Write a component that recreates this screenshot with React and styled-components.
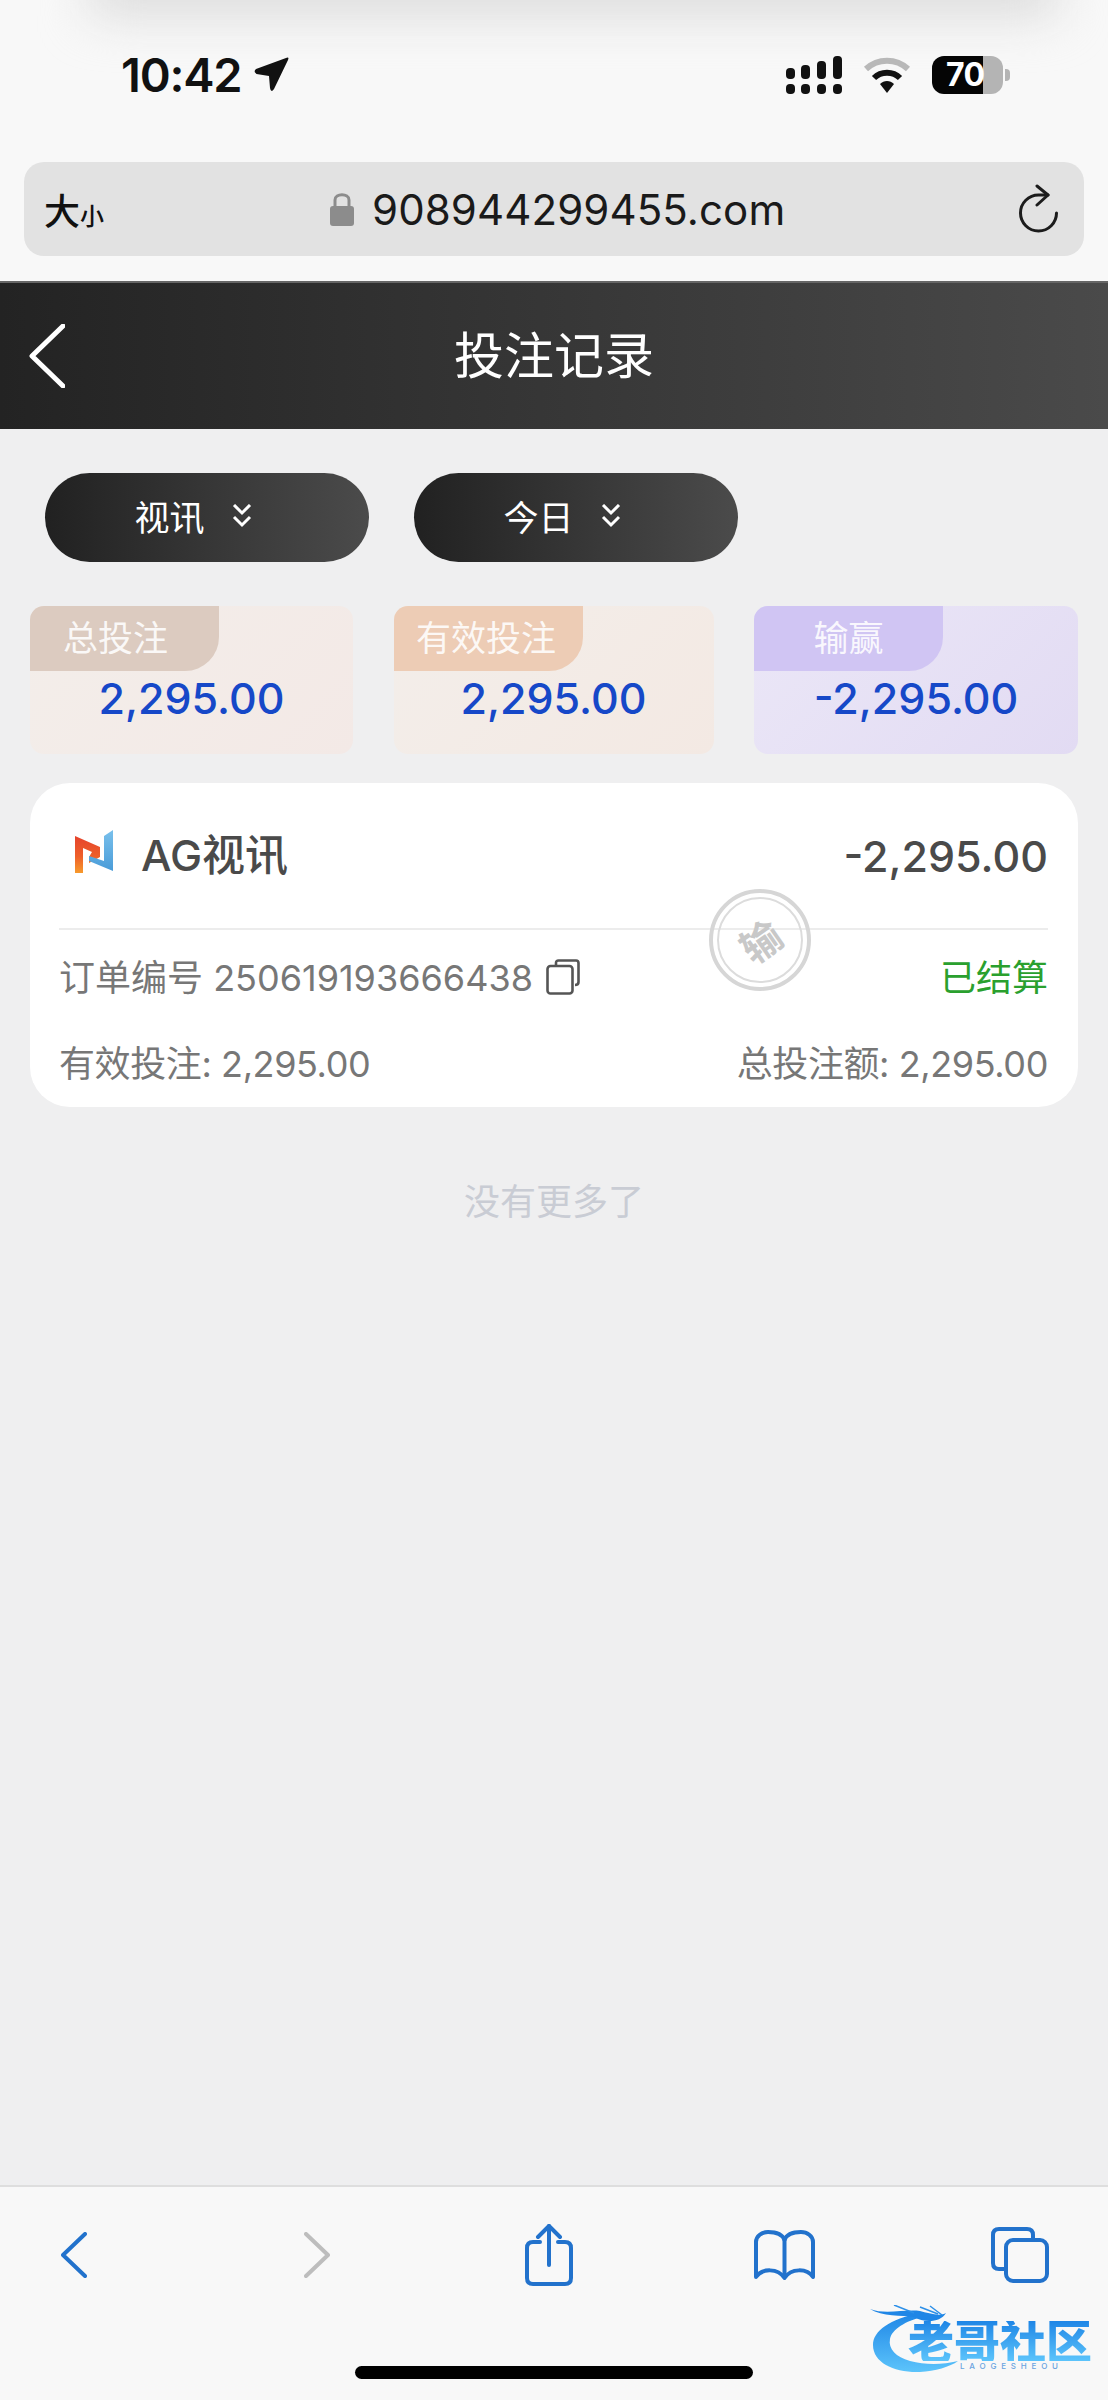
import React from "react";
import styled, { createGlobalStyle } from "styled-components";

const GlobalStyle = createGlobalStyle`
  html, body {
    margin: 0;
    padding: 0;
    background: #efeff0;
  }
  * {
    box-sizing: border-box;
  }
`;

const Page = styled.div`
  width: 1108px;
  height: 2400px;
  display: flex;
  flex-direction: column;
  position: relative;
  overflow: hidden;
  background: #efeff0;
  font-family: Inter, "Noto Sans CJK SC", sans-serif;
`;

// Safari chrome
const Chrome = styled.div`
  height: 281px;
  padding-top: 55px;
  position: relative;
  overflow: hidden;
  background: #f8f8f8;
  flex-shrink: 0;

  &::before {
    content: "";
    position: absolute;
    top: -44px;
    left: 90px;
    right: 50px;
    height: 60px;
    background: #dcdcdc;
    filter: blur(24px);
  }
`;

const StatusBar = styled.div`
  height: 40px;
  padding: 0 105px 0 121px;
  display: flex;
  justify-content: space-between;
  align-items: center;
  position: relative;
`;

const StatusLeft = styled.div`
  display: flex;
  align-items: center;
  gap: 13px;
`;

const Clock = styled.span`
  font-size: 47px;
  font-weight: 600;
  letter-spacing: -1.2px;
  line-height: 40px;
  color: #111;
`;

const StatusRight = styled.div`
  display: flex;
  align-items: center;
  gap: 21px;
`;

const Battery = styled.div`
  width: 71px;
  height: 38px;
  border-radius: 12px;
  background: linear-gradient(90deg, #050505 0, #050505 72%, #b4b4b4 72%, #b4b4b4 100%);
  color: #fff;
  font-size: 32px;
  font-weight: 700;
  line-height: 38px;
  padding-left: 14px;
  letter-spacing: -0.5px;
  position: relative;

  &::after {
    content: "";
    position: absolute;
    right: -7px;
    top: 13px;
    width: 5px;
    height: 12px;
    border-radius: 0 4px 4px 0;
    background: #b4b4b4;
  }
`;

const UrlBar = styled.div`
  height: 94px;
  margin: 67px 24px 0;
  padding: 0 25px 0 20px;
  border-radius: 20px;
  background: #e2e2e2;
  display: flex;
  align-items: center;
  position: relative;
`;

const TextSize = styled.div`
  width: 286px;
  display: flex;
  align-items: baseline;
  color: #111;
  font-size: 36px;
  font-weight: 500;
`;

const SmallChar = styled.span`
  font-size: 24px;
`;

const Domain = styled.div`
  flex: 1;
  display: flex;
  align-items: center;
  gap: 18px;
  color: #1a1a1a;
  font-size: 42px;
  letter-spacing: 0.1px;
`;

// Page header
const Header = styled.header`
  height: 148px;
  flex-shrink: 0;
  padding-left: 29px;
  display: flex;
  align-items: center;
  position: relative;
  background: linear-gradient(90deg, #232323, #4a4a4a);
  border-top: 2px solid #666;
`;

const HeaderTitle = styled.h1`
  position: absolute;
  left: 0;
  right: 0;
  margin: 0;
  padding-bottom: 8px;
  text-align: center;
  color: #fff;
  font-size: 50px;
  font-weight: 400;
`;

const Main = styled.main`
  flex: 1;
  padding: 44px 30px 0;
`;

const Filters = styled.div`
  padding-left: 15px;
  display: flex;
  gap: 45px;
`;

const Pill = styled.div`
  width: 324px;
  height: 89px;
  padding: 0 28px 4px 0;
  border-radius: 45px;
  background: linear-gradient(90deg, #212121, #4b4b4b);
  color: #fff;
  font-size: 35px;
  display: flex;
  align-items: center;
  justify-content: center;
  gap: 27px;
`;

const Summary = styled.div`
  margin-top: 44px;
  display: flex;
  justify-content: space-between;
`;

const SummaryCard = styled.div`
  width: ${({ $w }) => $w}px;
  height: 148px;
  border-radius: 14px;
  background: ${({ $bg }) => $bg};
  overflow: hidden;
`;

const SummaryTag = styled.div`
  width: 189px;
  height: 65px;
  padding-right: ${({ $pad }) => $pad || 0}px;
  border-bottom-right-radius: 34px;
  background: ${({ $bg }) => $bg};
  color: rgba(255, 255, 255, 0.88);
  font-size: 35px;
  line-height: 64px;
  text-align: center;
`;

const SummaryValue = styled.div`
  margin-top: 1px;
  color: #1648c8;
  font-size: 43px;
  font-weight: 500;
  line-height: 52px;
  text-align: center;
`;

const OrderCard = styled.section`
  margin-top: 29px;
  padding: 0 30px 0 29px;
  height: 324px;
  border-radius: 40px;
  background: #fff;
  position: relative;
`;

const OrderHead = styled.div`
  height: 147px;
  display: flex;
  align-items: center;
  justify-content: space-between;
  border-bottom: 2px solid #ececec;
`;

const Game = styled.div`
  display: flex;
  align-items: center;
  gap: 28px;
  padding: 0 0 8px 16px;
  color: #4a4a4a;
  font-size: 43px;
  font-weight: 500;
`;

const Amount = styled.div`
  color: #4a4a4a;
  font-size: 43px;
  font-weight: 500;
`;

const OrderRow = styled.div`
  height: ${({ $h }) => $h}px;
  display: flex;
  align-items: center;
  justify-content: space-between;
  color: #777;
  font-size: 36px;
`;

const OrderNo = styled.div`
  display: flex;
  align-items: center;
  gap: 13px;
`;

const CopyGlyph = styled.svg`
  margin-top: 5px;
`;

const Settled = styled.span`
  color: #2aa02e;
`;

const Stat = styled.span`
  letter-spacing: -0.4px;
`;

const Stamp = styled.div`
  position: absolute;
  left: 679px;
  top: 106px;
  width: 102px;
  height: 102px;
  border-radius: 50%;
  border: 4px solid #d6d6d6;
  display: flex;
  align-items: center;
  justify-content: center;
  color: #c8c8c8;
  font-size: 40px;
  font-weight: 700;

  &::after {
    content: "";
    position: absolute;
    inset: 4px;
    border-radius: 50%;
    border: 2px solid #dcdcdc;
  }
`;

const StampText = styled.span`
  transform: rotate(-35deg);
`;

const NoMore = styled.div`
  margin-top: 70px;
  text-align: center;
  color: #c9ccd4;
  font-size: 36px;
  line-height: 50px;
`;

// Safari bottom toolbar
const Toolbar = styled.footer`
  height: 215px;
  flex-shrink: 0;
  background: #f8f8f8;
  border-top: 2px solid #dedede;
`;

const ToolbarIcons = styled.div`
  height: 136px;
  padding-left: 61px;
  display: grid;
  grid-template-columns: 243px 221px 229px 237px 58px;
  align-items: center;
  justify-items: start;
`;

const HomeIndicator = styled.div`
  width: 398px;
  height: 13px;
  margin: 43px 0 0 355px;
  border-radius: 7px;
  background: #000;
`;

const Watermark = styled.div`
  position: absolute;
  right: 13px;
  bottom: 25px;
  width: 225px;
  height: 70px;
`;

const WatermarkDragon = styled.svg`
  position: absolute;
  left: 0;
  top: 0;
`;

const WatermarkName = styled.div`
  position: absolute;
  left: 38px;
  top: 16px;
  font-size: 46px;
  font-weight: 900;
  line-height: 40px;
  white-space: nowrap;
  background: linear-gradient(180deg, #1f86e6, #5cc4fb);
  -webkit-background-clip: text;
  background-clip: text;
  color: transparent;
`;

const WatermarkSub = styled.div`
  position: absolute;
  left: 90px;
  top: 56px;
  color: #6aa4e0;
  font-size: 8px;
  font-weight: 500;
  line-height: 10px;
  letter-spacing: 4.8px;
  white-space: nowrap;
`;

const BLUE = "#2272cc";

const LocationArrow = () => (
  <svg width="35" height="36" viewBox="0 0 35 36">
    <path d="M32 1 Q35.500 -0.500 34 3 L20 32 Q17 36.500 16 31 L15 19 L2.500 17 Q-1 14.500 2 12 Z" fill="#111" />
  </svg>
);

const Signal = () => (
  <svg width="56" height="38" viewBox="0 0 56 38" fill="#111">
    <rect x="0" y="12" width="9" height="11" rx="4" />
    <rect x="15" y="9" width="9" height="14" rx="4" />
    <rect x="31" y="5" width="9" height="18" rx="4" />
    <rect x="47" y="0" width="9" height="23" rx="4" />
    <rect x="0" y="28" width="9" height="10" rx="4" />
    <rect x="15" y="28" width="9" height="10" rx="4" />
    <rect x="31" y="28" width="9" height="10" rx="4" />
    <rect x="47" y="28" width="9" height="10" rx="4" />
  </svg>
);

const Wifi = () => (
  <svg width="48" height="36" viewBox="0 0 48 36" fill="none">
    <path d="M3 12 C15 1 33 1 45 12" stroke="#b8b8b8" strokeWidth="6" />
    <path d="M11 21 C18 14 30 14 37 21" stroke="#111" strokeWidth="6" />
    <path d="M17 27 L24 36 L31 27 C27 23 21 23 17 27 Z" fill="#111" />
  </svg>
);

const Lock = () => (
  <svg width="24" height="34" viewBox="0 0 24 34">
    <path d="M5 15 V8 C5 1 19 1 19 8 V15" fill="none" stroke="#8c8c8c" strokeWidth="3" />
    <rect x="0" y="14" width="24" height="20" rx="3" fill="#8c8c8c" />
  </svg>
);

const Reload = () => (
  <svg width="40" height="50" viewBox="0 0 40 50" fill="none" stroke="#1c1c1c" strokeWidth="3" strokeLinecap="round" strokeLinejoin="round">
    <path d="M29 11 H19.500 A18 18 0 1 0 37.500 29" />
    <path d="M18 2 L29 11 L18 21" />
  </svg>
);

const BackChevron = () => (
  <svg width="36" height="64" viewBox="0 0 36 64" fill="none" stroke="#fff" strokeWidth="5" strokeLinecap="round" strokeLinejoin="round">
    <path d="M34 2 L3 32 L34 62" />
  </svg>
);

const DoubleChevron = () => (
  <svg width="20" height="24" viewBox="0 0 20 24" fill="none" stroke="#fff" strokeWidth="3">
    <path d="M2 1 L10 9 L18 1" />
    <path d="M2 13 L10 21 L18 13" />
  </svg>
);

const AgLogo = () => (
  <svg width="38" height="44" viewBox="0 0 38 44">
    <defs>
      <linearGradient id="agLeft" x1="0" y1="0" x2="0" y2="1">
        <stop offset="0" stopColor="#e5432c" />
        <stop offset="0.55" stopColor="#ee5f2a" />
        <stop offset="1" stopColor="#f79a2c" />
      </linearGradient>
      <linearGradient id="agRight" x1="0" y1="0" x2="0" y2="1">
        <stop offset="0" stopColor="#79c0ec" />
        <stop offset="1" stopColor="#4a9cd8" />
      </linearGradient>
    </defs>
    <path d="M0 6 L25 17 V27 L14 33 V27 L17 22 L8 18 V43 L0 43 Z" fill="url(#agLeft)" />
    <path d="M38 0 V41 L14 31 V26 L29 31 V6 Z" fill="url(#agRight)" />
  </svg>
);

const CopyIcon = () => (
  <CopyGlyph width="34" height="36" viewBox="0 0 34 36" fill="none" stroke="#555" strokeWidth="2.6">
    <path d="M10 7 V4 Q10 1.500 12.500 1.500 H30 Q32.500 1.500 32.500 4 V23 Q32.500 26 29 26" />
    <rect x="1.500" y="7" width="25" height="27.500" rx="3" />
  </CopyGlyph>
);

const NavBack = ({ color }) => (
  <svg width="26" height="46" viewBox="0 0 26 46" fill="none" stroke={color} strokeWidth="4" strokeLinecap="round" strokeLinejoin="round">
    <path d="M24 2 L2 23 L24 44" />
  </svg>
);

const NavForward = ({ color }) => (
  <svg width="26" height="46" viewBox="0 0 26 46" fill="none" stroke={color} strokeWidth="4" strokeLinecap="round" strokeLinejoin="round">
    <path d="M2 2 L24 23 L2 44" />
  </svg>
);

const ShareIcon = () => (
  <svg width="48" height="62" viewBox="0 0 48 62" fill="none" stroke={BLUE} strokeWidth="4" strokeLinecap="round" strokeLinejoin="round">
    <path d="M15 18 H8 Q2 18 2 24 V54 Q2 60 8 60 H40 Q46 60 46 54 V24 Q46 18 40 18 H33" />
    <path d="M24 41 V2" />
    <path d="M13 13 L24 2 L35 13" />
  </svg>
);

const BookIcon = () => (
  <svg width="61" height="50" viewBox="0 0 61 50" fill="none" stroke={BLUE} strokeWidth="4" strokeLinejoin="round">
    <path d="M30.500 10 C28 3 20 2 14 2 C8 2 2 6 2 12 V47 C8 38 24 38 30.500 48 C37 38 53 38 59 47 V12 C59 6 53 2 47 2 C41 2 33 3 30.500 10 Z" />
    <path d="M30.500 10 V48" />
  </svg>
);

const TabsIcon = () => (
  <svg width="58" height="56" viewBox="0 0 58 56" fill="none" stroke={BLUE} strokeWidth="4">
    <path d="M13 42 H8 Q2 42 2 36 V8 Q2 2 8 2 H36 Q42 2 42 8 V13" />
    <rect x="15" y="13" width="41" height="41" rx="7" />
  </svg>
);

const DragonMark = () => (
  <WatermarkDragon width="225" height="70" viewBox="0 0 225 70">
    <defs>
      <linearGradient id="dragon" x1="0" y1="0" x2="0" y2="1">
        <stop offset="0" stopColor="#1f86e6" />
        <stop offset="1" stopColor="#5cc4fb" />
      </linearGradient>
    </defs>
    <path d="M50 8 C20 14 3 26 3 40 C3 58 25 68 50 67 C65 66 80 62 88 56 C72 60 55 60 40 56 C26 52 18 44 20 34 C22 24 36 16 52 12 Z" fill="url(#dragon)" />
    <path d="M0 4 C15 10 35 4 50 6 C58 8 70 12 76 8 C70 18 54 18 44 12 C32 10 12 12 0 4 Z" fill="#1f86e6" />
    <path d="M24 0 L44 8 M50 2 L68 9 M60 1 L72 10" stroke="#2d90e8" strokeWidth="1.5" fill="none" />
  </WatermarkDragon>
);

const summaries = [
  { label: "总投注", value: "2,295.00", w: 323, bg: "linear-gradient(135deg, #f3eeea, #f3e9e6)", tag: "#dccbc0", pad: 18 },
  { label: "有效投注", value: "2,295.00", w: 320, bg: "linear-gradient(135deg, #f3eeea, #f3e9e3)", tag: "#edccb5", pad: 4 },
  { label: "输赢", value: "-2,295.00", w: 324, bg: "linear-gradient(135deg, #ebe7f7, #e2dbf3)", tag: "#d0c5f3" },
];

const App = () => (
  <Page>
    <GlobalStyle />
    <Chrome>
      <StatusBar>
        <StatusLeft>
          <Clock>10:42</Clock>
          <LocationArrow />
        </StatusLeft>
        <StatusRight>
          <Signal />
          <Wifi />
          <Battery>70</Battery>
        </StatusRight>
      </StatusBar>
      <UrlBar>
        <TextSize>
          大<SmallChar>小</SmallChar>
        </TextSize>
        <Domain>
          <Lock />
          908944299455.com
        </Domain>
        <Reload />
      </UrlBar>
    </Chrome>

    <Header>
      <BackChevron />
      <HeaderTitle>投注记录</HeaderTitle>
    </Header>

    <Main>
      <Filters>
        <Pill>
          视讯
          <DoubleChevron />
        </Pill>
        <Pill>
          今日
          <DoubleChevron />
        </Pill>
      </Filters>

      <Summary>
        {summaries.map((s) => (
          <SummaryCard key={s.label} $w={s.w} $bg={s.bg}>
            <SummaryTag $bg={s.tag} $pad={s.pad}>
              {s.label}
            </SummaryTag>
            <SummaryValue>{s.value}</SummaryValue>
          </SummaryCard>
        ))}
      </Summary>

      <OrderCard>
        <OrderHead>
          <Game>
            <AgLogo />
            AG视讯
          </Game>
          <Amount>-2,295.00</Amount>
        </OrderHead>
        <OrderRow $h={89}>
          <OrderNo>
            订单编号 250619193666438
            <CopyIcon />
          </OrderNo>
          <Settled>已结算</Settled>
        </OrderRow>
        <OrderRow $h={84}>
          <Stat>有效投注: 2,295.00</Stat>
          <Stat>总投注额: 2,295.00</Stat>
        </OrderRow>
        <Stamp>
          <StampText>输</StampText>
        </Stamp>
      </OrderCard>

      <NoMore>没有更多了</NoMore>
    </Main>

    <Toolbar>
      <ToolbarIcons>
        <NavBack color={BLUE} />
        <NavForward color="#bdbdbd" />
        <ShareIcon />
        <BookIcon />
        <TabsIcon />
      </ToolbarIcons>
      <HomeIndicator />
    </Toolbar>

    <Watermark>
      <DragonMark />
      <WatermarkName>老哥社区</WatermarkName>
      <WatermarkSub>LAOGESHEOU</WatermarkSub>
    </Watermark>
  </Page>
);

export default App;
